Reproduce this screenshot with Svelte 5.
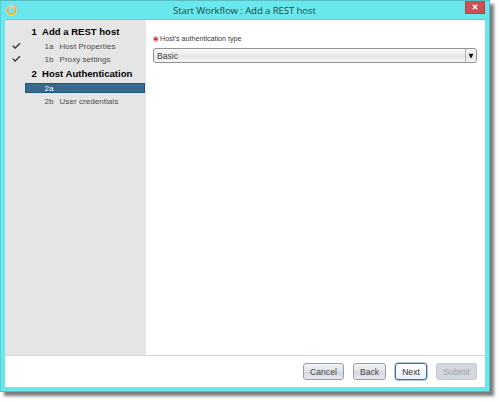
<script>
  const groups = [
    {
      number: '1',
      title: 'Add a REST host',
      steps: [
        { id: '1a', label: 'Host Properties', done: true },
        { id: '1b', label: 'Proxy settings', done: true }
      ]
    },
    {
      number: '2',
      title: 'Host Authentication',
      steps: [
        { id: '2a', label: '', active: true },
        { id: '2b', label: 'User credentials' }
      ]
    }
  ];
</script>

<div class="page">
  <div class="window">
    <header>
      <svg class="logo" width="12" height="13" viewBox="0 0 12 13">
        <defs>
          <linearGradient id="ring" x1="0" y1="0" x2="0" y2="1">
            <stop offset="0" stop-color="#f0c8a0" />
            <stop offset="0.4" stop-color="#f29a3c" />
            <stop offset="1" stop-color="#ffb000" />
          </linearGradient>
        </defs>
        <circle cx="5.6" cy="7.4" r="3.9" fill="none" stroke="#d9f4f0" stroke-width="2.8" />
        <circle cx="5.6" cy="7.4" r="3.9" fill="none" stroke="url(#ring)" stroke-width="2" />
        <circle cx="9.6" cy="2.8" r="1.2" fill="#e2a88a" />
      </svg>
      <h1>Start Workflow : Add a REST host</h1>
      <button class="close" aria-label="Close">
        <svg width="6" height="6" viewBox="0 0 6 6"><path d="M.8.8 5.2 5.2M5.2.8.8 5.2" stroke="#fff" stroke-width="1.4" /></svg>
      </button>
    </header>

    <div class="client">
      <div class="body">
        <nav>
          {#each groups as group}
            <div class="group"><b>{group.number}</b><span>{group.title}</span></div>
            {#each group.steps as step}
              <div class="step" class:active={step.active}>
                <span class="tick">
                  {#if step.done}
                    <svg width="9" height="8" viewBox="0 0 9 8"><path d="M.7 3.7 3.2 6 8 1.2" fill="none" stroke="#3c3c3c" stroke-width="1.4" /></svg>
                  {/if}
                </span>
                <div class="row"><span class="id">{step.id}</span><span class="label">{step.label}</span></div>
              </div>
            {/each}
          {/each}
        </nav>
        <main>
          <div class="field-label">
            <svg width="6" height="6" viewBox="0 0 6 6"><path d="M2.8.3V5.7M.4 1.7 5.2 4.3M5.2 1.7.4 4.3" stroke="#d92c40" stroke-width="1.1" /></svg>
            <span>Host's authentication type</span>
          </div>
          <div class="select">
            <span class="value">Basic</span>
            <span class="arrow"><svg width="6" height="6" viewBox="0 0 6 6"><path d="M.6.8H5.4L3.4 5H2.6Z" fill="#111" /></svg></span>
          </div>
        </main>
      </div>
      <footer>
        <button class="cancel">Cancel</button>
        <button class="back">Back</button>
        <button class="next">Next</button>
        <button class="submit" disabled>Submit</button>
      </footer>
    </div>
  </div>
</div>

<style>
  :global(body) {
    margin: 0;
    background: #fff;
  }

  .page {
    width: 500px;
    height: 402px;
    overflow: hidden;
    background: #fff;
  }

  .window {
    box-sizing: border-box;
    width: 490px;
    height: 392px;
    border: 1px solid #55bcc1;
    border-left-color: #5ccdd2;
    background: #6ae7ed;
    box-shadow: 4px 4px 3px rgba(0, 0, 0, 0.52);
    font-family: 'Liberation Sans', Arial, sans-serif;
    display: flex;
    flex-direction: column;
    padding: 0 4px 4px;
  }

  header {
    height: 18px;
    display: flex;
    align-items: flex-start;
  }

  .logo {
    margin: 2px 0 0 1px;
  }

  h1 {
    flex: 1;
    margin: 0;
    padding-left: 155px;
    font: 9.7px/19px 'Open Sans', sans-serif;
    letter-spacing: -0.14px;
    color: #24494b;
    white-space: nowrap;
  }

  .close {
    box-sizing: border-box;
    width: 20px;
    height: 13px;
    padding: 0;
    border: 1px solid #b94149;
    border-top: 0;
    background: #ca5054;
    display: flex;
    align-items: center;
    justify-content: center;
  }

  .client {
    flex: 1;
    display: flex;
    flex-direction: column;
    background: #fff;
    border-top: 1px solid #5ccdd2;
  }

  .body {
    height: 335px;
    display: flex;
    border-bottom: 1px solid #d4d4d4;
  }

  nav {
    box-sizing: border-box;
    width: 141px;
    padding-top: 4px;
    background: #e5e5e5;
  }

  .group {
    height: 15px;
    display: flex;
    padding-left: 26.5px;
    font-size: 9.55px;
    line-height: 15px;
    font-weight: bold;
    color: #000;
    white-space: nowrap;
  }

  .group b {
    width: 10.5px;
  }

  .step {
    height: 13.5px;
    display: flex;
    align-items: center;
    font-size: 8px;
    letter-spacing: 0.06px;
    color: #4a4a4a;
    white-space: nowrap;
  }

  .tick {
    width: 13px;
    height: 8px;
    padding-left: 7px;
    display: flex;
  }

  .row {
    box-sizing: border-box;
    width: 120px;
    height: 10px;
    padding-left: 19.5px;
    display: flex;
    line-height: 12px;
  }

  .active .row {
    background: #38698c;
    box-shadow: inset 0 0 0 1px #1d587f;
    color: #fff;
  }

  .id {
    width: 15px;
  }

  main {
    flex: 1;
    padding: 14px 8px 0 7px;
  }

  .field-label {
    height: 10px;
    display: flex;
    align-items: center;
    gap: 1px;
    font-size: 7.15px;
    line-height: 11px;
    color: #3a3a3a;
    white-space: nowrap;
  }

  .select {
    box-sizing: border-box;
    height: 15px;
    margin-top: 4px;
    border: 1px solid #929292;
    border-radius: 3px;
    background: linear-gradient(#f8f8f8, #ececec 48%, #e3e3e3 52%, #f6f6f6);
    display: flex;
    font-size: 8.6px;
    line-height: 14px;
    color: #444;
  }

  .value {
    flex: 1;
    padding-left: 3px;
  }

  .arrow {
    width: 10px;
    border-left: 1px solid #b4b4b4;
    display: flex;
    align-items: center;
    justify-content: center;
  }

  footer {
    flex: 1;
    display: flex;
    justify-content: flex-end;
    align-items: flex-start;
    gap: 9px;
    padding: 7px 8px 0 0;
  }

  footer button {
    box-sizing: border-box;
    height: 17px;
    padding: 0;
    border: 1px solid #9a9da3;
    border-radius: 3px;
    background: linear-gradient(#f3f4f6, #dfe2e7 50%, #d4d8df 55%, #e9ebef);
    font: 8.6px/16px 'Liberation Sans', Arial, sans-serif;
    color: #444;
  }

  .cancel {
    width: 41px;
  }

  .back {
    width: 33px;
  }

  footer .next {
    width: 32px;
    border-color: #3f6b9e;
    box-shadow: 0 0 0 0.5px #6f93ba;
    background: linear-gradient(#fff, #eceff5);
    color: #333;
  }

  footer .submit {
    width: 41px;
    border-color: #c5c9d0;
    background: #d3d7de;
    color: #9fa3a9;
  }
</style>
